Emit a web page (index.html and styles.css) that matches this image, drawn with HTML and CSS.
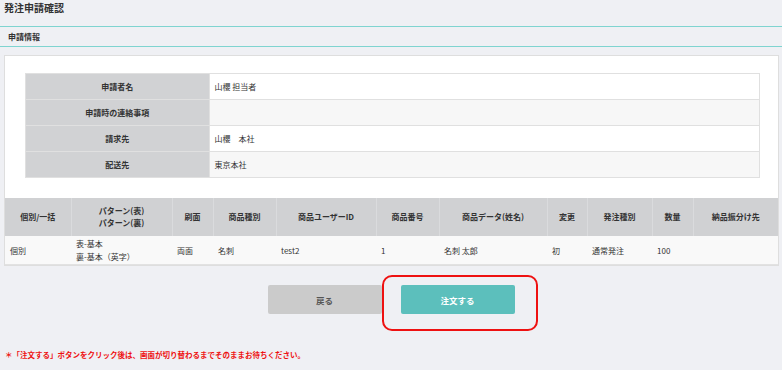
FILE: index.html
```html
<!DOCTYPE html>
<html lang="ja">
<head>
    <meta charset="UTF-8">
    <meta name="viewport" content="width=device-width, initial-scale=1.0">
    <title>発注申請確認</title>
    <link rel="stylesheet" href="styles.css">
</head>
<body>
    <h1 class="page-title">発注申請確認</h1>
    <h2 class="section-title">申請情報</h2>

    <div class="panel">
        <table class="info-table">
            <tr>
                <th>申請者名</th>
                <td>山櫻 担当者</td>
            </tr>
            <tr>
                <th>申請時の連絡事項</th>
                <td></td>
            </tr>
            <tr>
                <th>請求先</th>
                <td>山櫻　本社</td>
            </tr>
            <tr>
                <th>配送先</th>
                <td>東京本社</td>
            </tr>
        </table>

        <table class="order-table">
            <colgroup>
                <col style="width: 66px">
                <col style="width: 101px">
                <col style="width: 41px">
                <col style="width: 63px">
                <col style="width: 100px">
                <col style="width: 63px">
                <col style="width: 108px">
                <col style="width: 40px">
                <col style="width: 65px">
                <col style="width: 41px">
                <col>
            </colgroup>
            <thead>
                <tr>
                    <th>個別/一括</th>
                    <th>パターン(表)<br>パターン(裏)</th>
                    <th>刷面</th>
                    <th>商品種別</th>
                    <th>商品ユーザーID</th>
                    <th>商品番号</th>
                    <th>商品データ(姓名)</th>
                    <th>変更</th>
                    <th>発注種別</th>
                    <th>数量</th>
                    <th>納品振分け先</th>
                </tr>
            </thead>
            <tbody>
                <tr>
                    <td>個別</td>
                    <td>表-基本<br>裏-基本（英字）</td>
                    <td>両面</td>
                    <td>名刺</td>
                    <td>test2</td>
                    <td>1</td>
                    <td>名刺 太郎</td>
                    <td>初</td>
                    <td>通常発注</td>
                    <td>100</td>
                    <td></td>
                </tr>
            </tbody>
        </table>
    </div>

    <div class="actions">
        <button class="btn btn-back" type="button">戻る</button>
        <span class="highlight">
            <button class="btn btn-order" type="button">注文する</button>
        </span>
    </div>

    <p class="note">＊「注文する」ボタンをクリック後は、画面が切り替わるまでそのままお待ちください。</p>
</body>
</html>
```

FILE: styles.css
```css
body {
    margin: 0;
    background-color: #eff0f4;
    font-family: "Noto Sans CJK JP", "Noto Sans", sans-serif;
    color: #333;
    font-size: 8px;
}

.page-title {
    margin: 0;
    height: 24px;
    padding: 2px 0 0 4px;
    font-size: 10px;
    line-height: 12px;
    font-weight: bold;
    color: #333;
    border-bottom: 1px solid #7fd4d0;
}

.section-title {
    margin: 0;
    height: 19px;
    padding-left: 8px;
    font-size: 8px;
    line-height: 19px;
    font-weight: bold;
    border-bottom: 1px solid #7fd4d0;
}

.panel {
    margin: 8px 3px 0 4px;
    padding-top: 17px;
    background-color: #fff;
    border: 1px solid #dedede;
}

.info-table {
    width: calc(100% - 38px);
    margin: 0 18px 20px 20px;
    border-collapse: collapse;
    border: 1px solid #e0e0e0;
}

.info-table th,
.info-table td {
    height: 25px;
    padding: 0 5px;
    border: 1px solid #e0e0e0;
    font-size: 8px;
}

.info-table th {
    width: 25%;
    background-color: #d1d2d4;
    font-weight: bold;
    text-align: center;
}

.info-table td {
    background-color: #fff;
}

.info-table tr:nth-child(even) td {
    background-color: #f7f7f7;
}

.order-table {
    width: 100%;
    border-collapse: collapse;
    table-layout: fixed;
}

.order-table th {
    height: 38px;
    padding: 0 4px;
    background-color: #d0d1d3;
    border-right: 1px solid #dadbdd;
    font-weight: bold;
    line-height: 12px;
    text-align: center;
}

.order-table th:last-child {
    border-right: none;
}

.order-table td {
    height: 28px;
    padding: 0 5px;
    background-color: #f9f9f9;
    border-bottom: 1px solid #e2e2e2;
    line-height: 13px;
    vertical-align: middle;
}

.actions {
    display: flex;
    justify-content: center;
    gap: 19px;
    margin-top: 19px;
}

.btn {
    width: 114px;
    height: 29px;
    border: none;
    border-radius: 2px;
    font-family: inherit;
    font-size: 8.5px;
    font-weight: bold;
    cursor: pointer;
}

.btn-back {
    background-color: #cbcbcb;
    color: #555;
}

.btn-order {
    background-color: #5cbfbc;
    color: #fff;
}

.highlight {
    position: relative;
    display: block;
}

.highlight::after {
    content: "";
    position: absolute;
    top: -10px;
    left: -19px;
    right: -23px;
    bottom: -17px;
    border: 2px solid #ee1111;
    border-radius: 10px;
    pointer-events: none;
}

.note {
    margin: 35px 0 0 5px;
    font-size: 7.5px;
    line-height: 11px;
    font-weight: bold;
    color: #ee1111;
}
```
